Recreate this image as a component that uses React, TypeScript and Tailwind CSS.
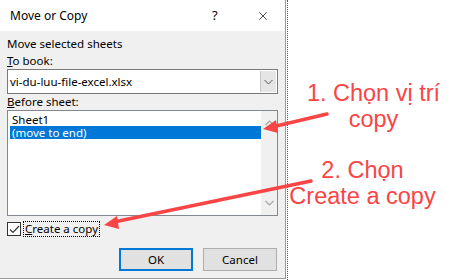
import { X } from "lucide-react";

const ui = { fontFamily: '"Noto Sans", "Liberation Sans", sans-serif' };
const note = { fontFamily: '"Liberation Sans", Arial, sans-serif' };

function Chevron({ up = false }: { up?: boolean }) {
  return (
    <svg width="9" height="6" viewBox="0 0 9 6" className={up ? "rotate-180" : ""}>
      <path d="M0.5 1 L4.5 5 L8.5 1" fill="none" stroke="#a6a6a6" strokeWidth="1.2" />
    </svg>
  );
}

export default function App() {
  return (
    <div className="relative w-[459px] h-[280px] bg-white overflow-hidden">
      <div className="flex h-full">
        {/* Dialog */}
        <div
          className="w-[286px] h-[279px] flex flex-col border-r border-b border-[#9a9a9a] bg-[#f0f0f0] text-[11.5px] text-black"
          style={ui}
        >
          <div className="h-[31px] shrink-0 bg-white flex items-center pl-[10px] pr-[15px] text-[12px]">
            <span className="flex-1">Move or Copy</span>
            <span className="w-[12px] text-[13px] mr-[32px]">?</span>
            <X size={14} strokeWidth={1.2} />
          </div>

          <div className="flex flex-col px-[7px] pt-[5px]">
            <div className="h-[15px] leading-[15px]">Move selected sheets</div>
            <div className="h-[15px] leading-[15px] mt-[2px]">
              <span className="underline">T</span>o book:
            </div>

            <div className="mt-[1px] h-[25px] w-[271px] flex border border-[#7a7a7a] bg-white">
              <div className="flex-1 flex items-center pl-[2px]">vi-du-luu-file-excel.xlsx</div>
              <div className="w-[16px] m-[1px] bg-[#e5e5e5] border-l border-[#c8c8c8] flex items-center justify-center">
                <svg width="9" height="6" viewBox="0 0 9 6">
                  <path d="M0.5 1 L4.5 5 L8.5 1" fill="none" stroke="#555" strokeWidth="1" />
                </svg>
              </div>
            </div>

            <div className="h-[15px] leading-[15px]">
              <span className="underline">B</span>efore sheet:
            </div>

            <div className="mt-[1px] h-[106px] w-[271px] flex border border-[#828790] bg-white">
              <div className="flex-1 flex flex-col pt-[2px] pl-[2px]">
                <div className="pl-[2px] h-[13px] leading-[13px]">Sheet1</div>
                <div className="pl-[2px] h-[13px] leading-[13px] bg-[#0078d7] text-white">(move to end)</div>
              </div>
              <div className="w-[16px] bg-[#f0f0f0] flex flex-col items-center justify-between py-[9px]">
                <Chevron up />
                <Chevron />
              </div>
            </div>

            <div className="mt-[5px] h-[16px] flex items-center gap-[2px]">
              <div className="w-[14px] h-[14px] border border-[#333] bg-white flex items-center justify-center">
                <svg width="11" height="9" viewBox="0 0 11 9">
                  <path d="M1 4.5 L4 7.5 L10 1" fill="none" stroke="#333" strokeWidth="1.2" />
                </svg>
              </div>
              <div className="border border-dotted border-black px-[1px] leading-[14px]">
                <span className="underline">C</span>reate a copy
              </div>
            </div>

            <div className="mt-[11px] flex justify-end gap-[10px] pr-[1px]">
              <button className="w-[74px] h-[23px] bg-[#e1e1e1] border-2 border-[#0078d7]">OK</button>
              <button className="w-[74px] h-[23px] bg-[#e1e1e1] border border-[#adadad]">Cancel</button>
            </div>
          </div>
        </div>

        {/* Annotations */}
        <div className="flex-1 border-l border-dotted border-[#555] ml-px flex flex-col text-[#f94545] text-[23.5px] leading-[26px]" style={note}>
          <div className="mt-[80px] text-center">
            1. Chọn vị trí
            <br />
            copy
          </div>
          <div className="mt-[25px] text-center pr-[22px]">
            2. Chọn
            <br />
            Create a copy
          </div>
        </div>
      </div>

      {/* Arrows */}
      <svg className="absolute inset-0 pointer-events-none" width="459" height="280">
        <line x1="327" y1="114" x2="272" y2="127" stroke="#f94545" strokeWidth="3.5" strokeLinecap="round" />
        <polygon points="263,129 276,120 278,133" fill="#f94545" />
        <line x1="311" y1="181" x2="114" y2="222" stroke="#f94545" strokeWidth="3.5" strokeLinecap="round" />
        <polygon points="104,225 117,216 119,229" fill="#f94545" />
      </svg>
    </div>
  );
}
